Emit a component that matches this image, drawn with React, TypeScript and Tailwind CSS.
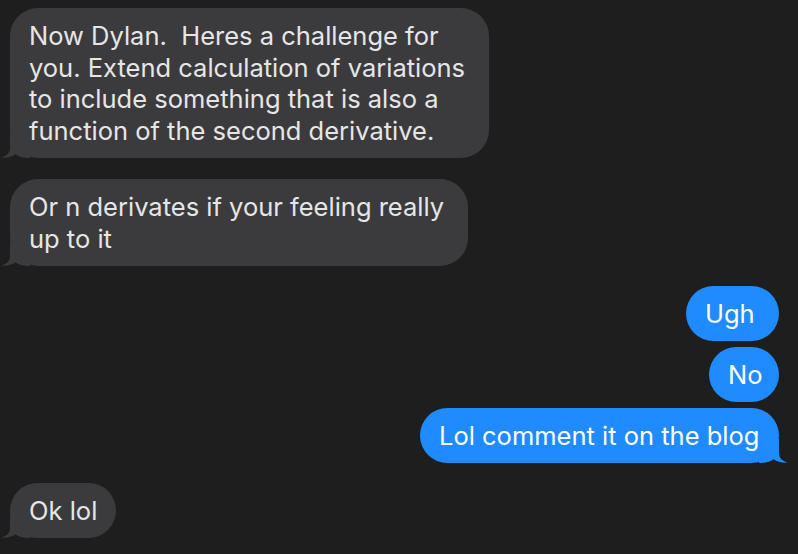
import type { ReactNode } from 'react';

type Side = 'in' | 'out';

function Tail({ side }: { side: Side }) {
  const fill = side === 'in' ? '#3b3b3d' : '#1f8bff';
  return (
    <svg
      width="30"
      height="24"
      viewBox="0 0 30 24"
      className={`absolute bottom-0 ${side === 'in' ? '-left-[10px]' : '-right-[10px] -scale-x-100'}`}
    >
      <path
        d="M10 0 L10 14 C10 19 6.5 22.3 1 23.6 C6.5 24.2 11.5 23 15.5 20.3 C18.5 22.6 22.5 24 28 24 L30 24 L30 0 Z"
        fill={fill}
      />
    </svg>
  );
}

function Bubble({
  side,
  width,
  tail,
  children,
}: {
  side: Side;
  width: string;
  tail?: boolean;
  children: ReactNode;
}) {
  const base =
    side === 'in'
      ? 'self-start bg-[#3b3b3d] text-[#e6e6e6]'
      : 'self-end bg-[#1f8bff] text-white';
  return (
    <div className={`relative rounded-[28px] px-[19px] py-3 ${base} ${width}`}>
      <p className="whitespace-pre text-[25.5px] leading-[31.5px]">{children}</p>
      {tail && <Tail side={side} />}
    </div>
  );
}

export default function App() {
  return (
    <div
      className="flex min-h-[554px] w-[798px] flex-col bg-[#1e1e1e] pl-[10px] pr-[19px] pt-[8px]"
      style={{ fontFamily: 'Inter, "Noto Sans", sans-serif' }}
    >
      <Bubble side="in" width="w-[479px] h-[150px]" tail>
        {'Now Dylan.  Heres a challenge for\nyou. Extend calculation of variations\nto include something that is also a\nfunction of the second derivative.'}
      </Bubble>

      <div className="mt-[21px] flex flex-col">
        <Bubble side="in" width="w-[458px] h-[87px]" tail>
          {'Or n derivates if your feeling really\nup to it'}
        </Bubble>
      </div>

      <div className="mt-5 flex flex-col gap-[6px]">
        <Bubble side="out" width="w-[93px] h-[55px]">
          Ugh
        </Bubble>
        <Bubble side="out" width="w-[70px] h-[55px]">
          No
        </Bubble>
        <Bubble side="out" width="w-[359px] h-[55px]" tail>
          Lol comment it on the blog
        </Bubble>
      </div>

      <div className="mt-5 flex flex-col">
        <Bubble side="in" width="w-[106px] h-[55px]" tail>
          Ok lol
        </Bubble>
      </div>
    </div>
  );
}
